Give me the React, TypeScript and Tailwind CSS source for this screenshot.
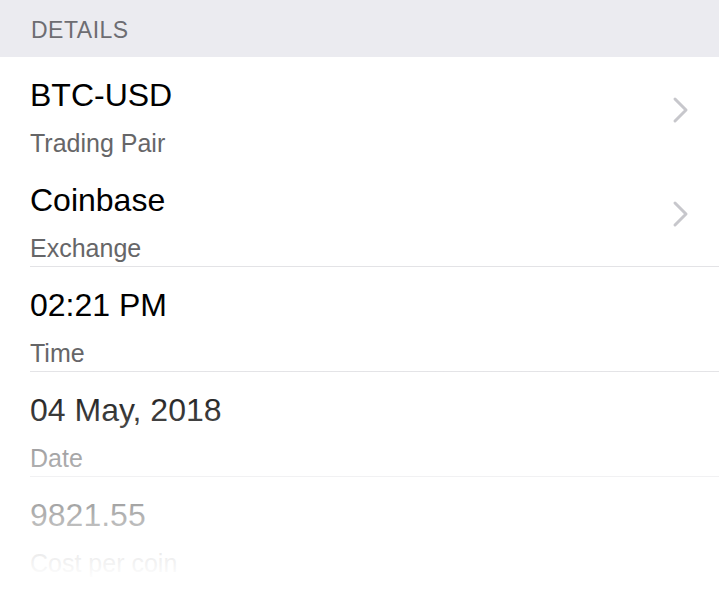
import React from 'react';

type Row = {
  value: string;
  label: string;
  chevron?: boolean;
  divider?: boolean;
};

const rows: Row[] = [
  { value: 'BTC-USD', label: 'Trading Pair', chevron: true },
  { value: 'Coinbase', label: 'Exchange', chevron: true, divider: true },
  { value: '02:21 PM', label: 'Time', divider: true },
  { value: '04 May, 2018', label: 'Date', divider: true },
  { value: '9821.55', label: 'Cost per coin', divider: true },
];

function Chevron() {
  return (
    <svg width="18" height="28" viewBox="0 0 18 28" fill="none" className="shrink-0">
      <path d="M3 3 L14 14 L3 25" stroke="#c7c7cc" strokeWidth="3" strokeLinecap="round" strokeLinejoin="round" />
    </svg>
  );
}

function DetailRow({ row }: { row: Row }) {
  return (
    <div className="pl-[30px]">
      <div
        className={
          'flex h-[105px] items-center pr-[29px] ' +
          (row.divider ? 'border-b border-[#e3e3e6]' : '')
        }
      >
        <div className="flex h-full flex-1 flex-col pt-[19px]">
          <div className="text-[32px] leading-[38px] text-black">{row.value}</div>
          <div className="mt-[14px] text-[25px] leading-[30px] text-[#666668]">{row.label}</div>
        </div>
        {row.chevron && <Chevron />}
      </div>
    </div>
  );
}

export default function App() {
  return (
    <div
      className="relative h-[599px] w-[719px] overflow-hidden bg-white"
      style={{ fontFamily: '"Liberation Sans", Arial, sans-serif' }}
    >
      <div className="flex h-[57px] items-center bg-[#ebebf0] pl-[31px] pt-[3px]">
        <span className="text-[23px] tracking-[0.5px] text-[#6d6d72]">DETAILS</span>
      </div>

      {rows.map((row) => (
        <DetailRow key={row.label} row={row} />
      ))}

      {/* fade over the lower rows */}
      <div className="pointer-events-none absolute inset-x-0 top-[366px] h-[233px] bg-gradient-to-b from-white/0 to-white to-92%" />
    </div>
  );
}
